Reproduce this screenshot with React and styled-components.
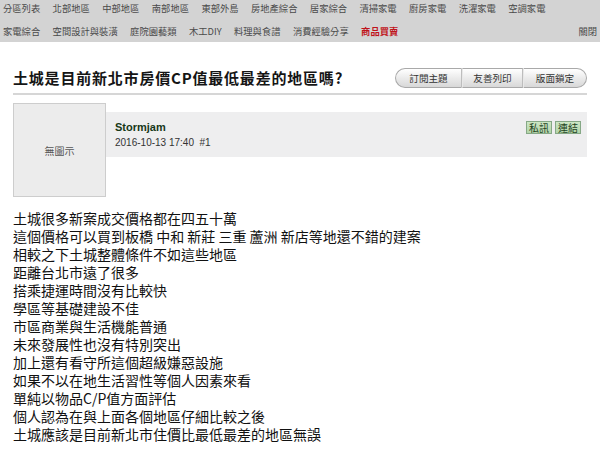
import styled, { createGlobalStyle } from 'styled-components';

const GlobalStyle = createGlobalStyle`
  body {
    margin: 0;
    background: #fff;
    font-family: "Noto Sans CJK TC", "Liberation Sans", sans-serif;
  }
`;

const navRows = [
  ['分區列表', '北部地區', '中部地區', '南部地區', '東部外島', '房地產綜合', '居家綜合', '清掃家電', '廚房家電', '洗濯家電', '空調家電'],
  ['家電綜合', '空間設計與裝潢', '庭院園藝類', '木工DIY', '料理與食譜', '消費經驗分享', '商品買賣'],
];

const lines = [
  '土城很多新案成交價格都在四五十萬',
  '這個價格可以買到板橋 中和 新莊 三重 蘆洲 新店等地還不錯的建案',
  '相較之下土城整體條件不如這些地區',
  '距離台北市遠了很多',
  '搭乘捷運時間沒有比較快',
  '學區等基礎建設不佳',
  '市區商業與生活機能普通',
  '未來發展性也沒有特別突出',
  '加上還有看守所這個超級嫌惡設施',
  '如果不以在地生活習性等個人因素來看',
  '單純以物品C/P值方面評估',
  '個人認為在與上面各個地區仔細比較之後',
  '土城應該是目前新北市住價比最低最差的地區無誤',
];

const NavBar = styled.nav`
  background: #d3d3d3;
  height: 42px;
  box-sizing: border-box;
  padding: 0 3px;
`;

const NavRow = styled.div`
  display: flex;
  align-items: center;
  gap: 12.4px;
  height: ${(p) => (p.$second ? '20px' : '18px')};
  margin-top: ${(p) => (p.$second ? '4px' : '0')};
`;

const NavItem = styled.span`
  font-size: 9.3px;
  line-height: 1;
  white-space: nowrap;
  color: ${(p) => (p.$active ? '#c0131b' : '#4a4a4a')};
  font-weight: ${(p) => (p.$active ? 700 : 400)};
`;

const CloseLink = styled(NavItem)`
  margin-left: auto;
`;

const Main = styled.main`
  padding: 0 13px;
`;

const TitleRow = styled.div`
  display: flex;
  align-items: center;
  justify-content: space-between;
  padding: 26px 0 5px;
  border-bottom: 2px solid #d6d6d6;
`;

const Title = styled.h1`
  margin: 0;
  font-size: 15px;
  line-height: 20px;
  font-weight: 700;
  color: #151515;
  letter-spacing: 0.8px;
`;

const ButtonGroup = styled.div`
  display: flex;
  height: 20px;
`;

const GroupButton = styled.button`
  font-family: inherit;
  font-size: 9.6px;
  color: #333;
  height: 20px;
  padding: 0;
  width: ${(p) => p.$w}px;
  border: 1px solid #a9a9a9;
  border-left-color: ${(p) => (p.$first ? '#a9a9a9' : '#e8e8e8')};
  border-right-color: ${(p) => (p.$last ? '#a9a9a9' : '#bdbdbd')};
  border-radius: ${(p) => (p.$first ? '10px 0 0 10px' : p.$last ? '0 10px 10px 0' : '0')};
  background: linear-gradient(#ffffff, #e9e9e9 55%, #d8d8d8);
`;

const Post = styled.section`
  display: flex;
  margin-top: 8px;
`;

const Avatar = styled.div`
  width: 91px;
  height: 92px;
  border: 1px solid #cdcdcd;
  background: #ececec;
  display: flex;
  align-items: center;
  justify-content: center;
  font-size: 10px;
  color: #555;
  flex-shrink: 0;
`;

const PostHead = styled.div`
  flex: 1;
  margin-top: 9px;
  height: 45px;
  background: #eeeeef;
  display: flex;
  justify-content: space-between;
  padding: 0 6px 0 9px;
`;

const Author = styled.div`
  font-family: "Liberation Sans", Arial, sans-serif;
  padding-top: 8px;
`;

const Name = styled.div`
  font-size: 11px;
  font-weight: 700;
  color: #173817;
  line-height: 14px;
`;

const Meta = styled.div`
  font-size: 10px;
  color: #333;
  margin-top: 2px;
  line-height: 14px;
`;

const Tags = styled.div`
  display: flex;
  align-items: flex-start;
  gap: 3px;
  padding-top: 9px;
`;

const Tag = styled.span`
  display: block;
  white-space: nowrap;
  padding: 0 2px;
  border: 1px solid #86a886;
  background: linear-gradient(#cde6c4, #b2d4a8);
  color: #1f441f;
  font-size: 10px;
  line-height: 11px;
  height: 11px;
`;

const Body = styled.div`
  margin-top: 12px;
  font-size: 14px;
  line-height: 18px;
  color: #111;
`;

export default function App() {
  return (
    <>
      <GlobalStyle />
      <NavBar>
        {navRows.map((row, i) => (
          <NavRow key={i} $second={i === 1}>
            {row.map((item) => (
              <NavItem key={item} $active={item === '商品買賣'}>
                {item}
              </NavItem>
            ))}
            {i === 1 && <CloseLink>關閉</CloseLink>}
          </NavRow>
        ))}
      </NavBar>
      <Main>
        <TitleRow>
          <Title>土城是目前新北市房價CP值最低最差的地區嗎?</Title>
          <ButtonGroup>
            <GroupButton $first $w={67}>訂閱主題</GroupButton>
            <GroupButton $w={61}>友善列印</GroupButton>
            <GroupButton $last $w={64}>版面鎖定</GroupButton>
          </ButtonGroup>
        </TitleRow>
        <Post>
          <Avatar>無圖示</Avatar>
          <PostHead>
            <Author>
              <Name>Stormjam</Name>
              <Meta>2016-10-13 17:40&nbsp; #1</Meta>
            </Author>
            <Tags>
              <Tag>私訊</Tag>
              <Tag>連結</Tag>
            </Tags>
          </PostHead>
        </Post>
        <Body>
          {lines.map((line) => (
            <div key={line}>{line}</div>
          ))}
        </Body>
      </Main>
    </>
  );
}
